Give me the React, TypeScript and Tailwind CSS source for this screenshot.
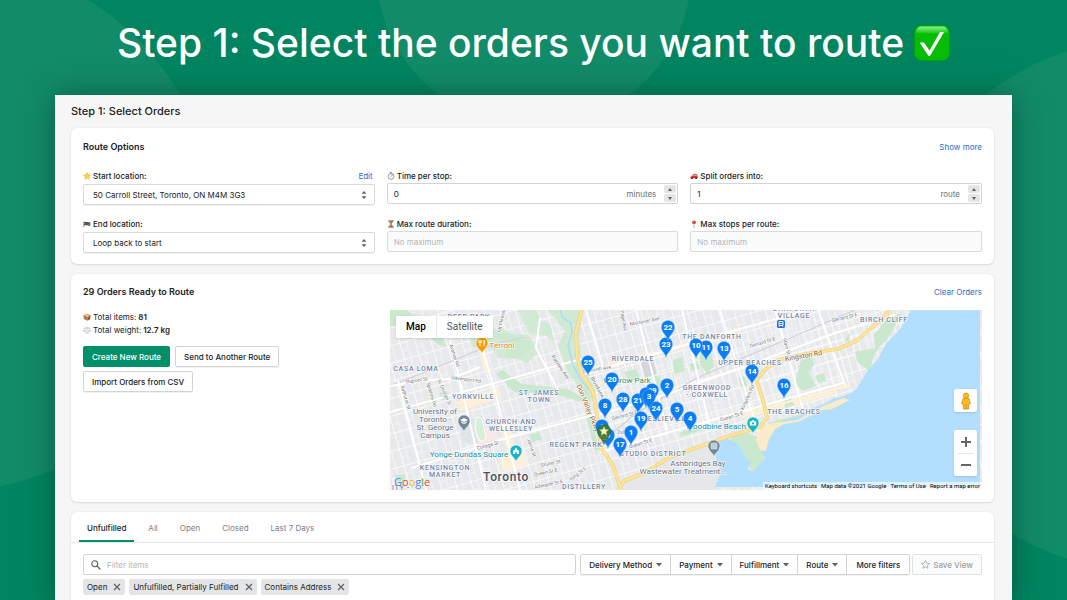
import React, { useState } from 'react';

const Star = ({ className }: { className: string }) => (
    <svg viewBox="0 0 16 16" className={className} aria-hidden="true">
        <path d="M8 1l2.200 4.600 5 .6-3.700 3.500 1 5L8 12.200 3.500 14.700l1-5L.8 6.200l5-.6z" fill="#fdd44b" stroke="#f5a623" strokeWidth="1" strokeLinejoin="round" />
    </svg>
);

const Flag = ({ className }: { className: string }) => (
    <svg viewBox="0 0 16 16" className={className} aria-hidden="true">
        <path d="M1.500 3v11" stroke="#555" strokeWidth="1.200" />
        <path d="M2 4q3.500-1.500 6.500 0t6.500 0v7q-3.500 1.500-6.500 0T2 11z" fill="#8b8b8b" />
        <path d="M3 4h2v2H3zM7 4h2v2H7zM11 5h2v2h-2zM5 6h2v2H5zM9 6h2v2H9zM3 8h2v2H3zM7 8h2v2H7zM11 9h2v2h-2z" fill="#222" />
    </svg>
);

const Stopwatch = ({ className }: { className: string }) => (
    <svg viewBox="0 0 16 16" className={className} fill="none" stroke="#777" aria-hidden="true">
        <circle cx="8" cy="9" r="5.800" fill="#fafafa" strokeWidth="1.400" />
        <path d="M6.500 1.200h3M8 1.500V3M12.500 3.500l1 1M8 9l2.500-2.500" strokeWidth="1.400" strokeLinecap="round" />
    </svg>
);

const Hourglass = ({ className }: { className: string }) => (
    <svg viewBox="0 0 16 16" className={className} aria-hidden="true">
        <path d="M4.500 2.500h7c0 3-2 4-2.500 5.500.5 1.500 2.500 2.500 2.500 5.500h-7c0-3 2-4 2.500-5.500-.5-1.500-2.500-2.500-2.500-5.500z" fill="#e4e0da" stroke="#b9aca0" strokeWidth=".6" />
        <path d="M4.500 3.500h7L8.800 8l2.700 5h-7l2.700-5z" fill="#a9763f" />
        <path d="M2.500 1h11v2.200h-11zM2.500 12.800h11V15h-11z" fill="#7a3f26" />
    </svg>
);

const Car = ({ className }: { className: string }) => (
    <svg viewBox="0 0 16 16" className={className} aria-hidden="true">
        <path d="M.8 9.500l3-1.500 2.700-4.200q3.500-1 7 0L15.400 8v4.500H.8z" fill="#e2382c" />
        <path d="M5.300 8l2-3h2.200v3zM10.300 5h2.500l1 3h-3.500z" fill="#9fc7dc" />
        <circle cx="4.200" cy="12.300" r="1.900" fill="#333" />
        <circle cx="12.200" cy="12.300" r="1.900" fill="#333" />
    </svg>
);

const RoundPin = ({ className }: { className: string }) => (
    <svg viewBox="0 0 16 16" className={className} aria-hidden="true">
        <path d="M8 7v8" stroke="#8e8e8e" strokeWidth="1.400" strokeLinecap="round" />
        <circle cx="8" cy="4.500" r="3.700" fill="#de3a33" />
        <circle cx="6.900" cy="3.300" r="1" fill="#ff9f98" />
    </svg>
);

const Box = ({ className }: { className: string }) => (
    <svg viewBox="0 0 16 16" className={className} aria-hidden="true">
        <path d="M1 4l7-3 7 3-6 3z" fill="#dcb07a" />
        <path d="M1 4l8 3v8.500L1.500 12z" fill="#b5793f" />
        <path d="M9 7l6-3-.5 8L9 15.500z" fill="#8b5527" />
        <path d="M4 2.800l7 3v3l-1.800-.6L2.600 3.400z" fill="#eed9b5" />
    </svg>
);

const Scale = ({ className }: { className: string }) => (
    <svg viewBox="0 0 16 16" className={className} fill="none" stroke="#a9afb5" aria-hidden="true">
        <path d="M8 1.500V13M2.500 4h11M4.500 14.200h7" strokeWidth="1.200" strokeLinecap="round" />
        <path d="M3 4L1 10h4zM13 4l-2 6h4z" strokeWidth=".7" />
        <path d="M.8 10h4.400q-2.200 2.400-4.400 0zM10.800 10h4.400q-2.200 2.400-4.400 0z" fill="#c5cbd1" strokeWidth=".6" />
    </svg>
);

const CheckBadge = () => (
    <svg viewBox="0 0 36 36" className="size-9 shrink-0" role="img" aria-label="Done">
        <defs>
            <linearGradient id="gloss" x1="0" y1="0" x2="0" y2="1">
                <stop offset="0" stopColor="#8cf28a" />
                <stop offset="1" stopColor="#14c514" />
            </linearGradient>
        </defs>
        <rect x=".5" y=".5" width="35" height="35" rx="7" fill="#04bd04" stroke="#079c16" />
        <path d="M7 1.500h22q4 0 5 5.500-1 1.500-4 1.500H6Q3 8.500 2 7q1-5.500 5-5.500z" fill="url(#gloss)" />
        <path d="M5.500 17.500h4.500l5.500 8L26 7h4L16 31h-1.500z" fill="#fff" />
    </svg>
);

interface Marker {
    n: number;
    x: number;
    y: number;
}

const markers: Marker[] = [
    { n: 23, x: 276, y: 34 }, { n: 22, x: 278, y: 17 }, { n: 11, x: 316, y: 37 }, { n: 10, x: 306, y: 35 },
    { n: 13, x: 334, y: 38 }, { n: 25, x: 198, y: 52 }, { n: 20, x: 222, y: 69 }, { n: 28, x: 233, y: 89 },
    { n: 2, x: 277, y: 75 }, { n: 29, x: 262, y: 80 }, { n: 21, x: 248, y: 90 }, { n: 24, x: 266, y: 98 },
    { n: 7, x: 256, y: 84 }, { n: 3, x: 259, y: 86 }, { n: 5, x: 287, y: 99 }, { n: 4, x: 300, y: 108 },
    { n: 8, x: 215, y: 95 }, { n: 19, x: 251, y: 108 }, { n: 1, x: 241, y: 122 }, { n: 6, x: 212, y: 116 },
    { n: 9, x: 218, y: 125 }, { n: 17, x: 230, y: 134 }, { n: 14, x: 362, y: 61 }, { n: 16, x: 394, y: 75 },
];

interface Label {
    t: string;
    x: number;
    y: number;
    r?: number;
}

const districts: Label[] = [
    { t: 'DEER PARK', x: 79, y: 9 }, { t: 'CASA LOMA', x: 26, y: 61 }, { t: 'YORKVILLE', x: 83, y: 89 },
    { t: 'ST. JAMES', x: 149, y: 85 }, { t: 'TOWN', x: 149, y: 92 }, { t: 'CHURCH AND', x: 121, y: 114 },
    { t: 'WELLESLEY', x: 121, y: 121 }, { t: 'REGENT PARK', x: 186, y: 137 }, { t: 'KENSINGTON', x: 55, y: 160 },
    { t: 'MARKET', x: 55, y: 167 }, { t: 'DISTILLERY', x: 194, y: 179 }, { t: 'RIVERDALE', x: 243, y: 51 },
    { t: 'THE DANFORTH', x: 322, y: 29 }, { t: 'UPPER BEACHES', x: 360, y: 55 }, { t: 'GREENWOOD', x: 317, y: 80 },
    { t: '- COXWELL', x: 317, y: 87 }, { t: 'LESLIEVILLE', x: 277, y: 111 }, { t: 'STUDIO DISTRICT', x: 263, y: 146 },
    { t: 'DANFORTH', x: 404, y: 1 }, { t: 'VILLAGE', x: 404, y: 8 }, { t: 'BIRCH CLIFF', x: 494, y: 12 },
    { t: 'THE BEACHES', x: 404, y: 104 }, { t: 'ITY -', x: 11, y: 180 },
];

const streets: Label[] = [
    { t: 'Dupont St', x: 27, y: 72, r: -8 }, { t: 'Davenport Rd', x: 76, y: 71, r: 8 }, { t: 'Avenue Rd', x: 63, y: 46, r: 72 },
    { t: 'Bathurst St', x: 14, y: 88, r: 74 }, { t: 'Spadina Rd', x: 40, y: 85, r: 74 }, { t: 'St George St', x: 53, y: 83, r: 66 },
    { t: 'College St', x: 98, y: 137, r: -15 }, { t: 'Jarvis St', x: 140, y: 138, r: 72 }, { t: 'Shuter St', x: 161, y: 155, r: -12 },
    { t: 'Queen St E', x: 156, y: 164, r: -12 }, { t: 'Adelaide St E', x: 159, y: 176, r: -12 }, { t: 'King St E', x: 189, y: 165, r: -38 },
    { t: 'Bayview Ave', x: 169, y: 58, r: 56 }, { t: 'Mortimer Ave', x: 255, y: 13, r: -12 }, { t: 'Pape Ave', x: 232, y: 11, r: 80 },
    { t: 'Danforth Ave', x: 207, y: 61, r: -10 }, { t: 'Broadview', x: 206, y: 78, r: 62 }, { t: 'Gerrard St E', x: 235, y: 107, r: -15 },
    { t: 'Queen St E', x: 251, y: 135, r: -17 }, { t: 'Dundas', x: 236, y: 123, r: -8 }, { t: 'Queen St E', x: 342, y: 108, r: -17 },
    { t: 'Kingston Rd', x: 359, y: 88, r: -66 }, { t: 'Gerrard St E', x: 373, y: 34, r: -17 }, { t: 'Gerrard St E', x: 455, y: 9, r: -14 },
    { t: 'Main St', x: 395, y: 37, r: 75 }, { t: 'Mt Pleasant Rd', x: 114, y: 6, r: -80 },
];

const PlacePin = ({ x, y, fill, children }: { x: number; y: number; fill: string; children: React.ReactNode }) => (
    <g transform={`translate(${x} ${y})`}>
        <path d="M0 10.500C-1.500 6-6 5-6 0a6 6 0 0 1 12 0c0 5-4.500 6-6 10.500z" fill={fill} stroke="#fff" strokeWidth=".5" />
        {children}
    </g>
);

const CityMap = () => (
    <svg viewBox="0 0 592 180" preserveAspectRatio="xMidYMid slice" className="block size-full" role="img" aria-label="Map of Toronto orders">
        <defs>
            <pattern id="blocks" width="15" height="17" patternUnits="userSpaceOnUse" patternTransform="rotate(-16)">
                <path d="M0 0h15M0 0v17" stroke="#fff" strokeWidth="1.500" fill="none" />
                <path d="M7 0v17M0 9h7" stroke="#f8f8f9" strokeWidth=".8" fill="none" />
            </pattern>
            <pattern id="lanes" width="7" height="19" patternUnits="userSpaceOnUse" patternTransform="rotate(-16)">
                <path d="M0 0h7M0 0v19" stroke="#fff" strokeWidth=".9" fill="none" />
            </pattern>
        </defs>
        <rect width="592" height="180" fill="#e8e9eb" />
        <rect width="592" height="180" fill="url(#blocks)" />
        <path d="M205 60l90-25 70-20 130-15-10 45-40 35-80 25-60 15-100 35z" fill="url(#lanes)" />

        {/* commercial areas */}
        <g fill="#fbf0d8">
            <path d="M66 92l42-14 3 10-40 13zM88 38l6-2 6 24-6 1zM110 112l8-2 8 36-8 2zM110 147l24-6 3 14-25 6zM205 58l60-17 1 4-60 17zM270 40l80-23 1 4-80 23zM352 106l95-26 1 3-95 26z" />
        </g>
        <path d="M70 112l22-6 6 20-8 8-18-2z" fill="#dfe3ea" />
        <path d="M86 124l18-5 4 12-18 6z" fill="#f8e7e4" />

        {/* parks and ravines */}
        <g fill="#c9e8cd">
            <path d="M0 0h17l9 10 13 7 11 7 7 13-8-2-10-8-14-3-12-8H0z" />
            <path d="M17 2l9 2 6 6-8 2zM75 20l22 2 15-4 12 8 18 6 1 6-17 11-18-1-5-8-20-3z" opacity=".75" />
            <path d="M128 0h19l3 10 10 3 4 18-10-6-15-1zM105 22l34 3 10 18-12 10-20-8z" opacity=".75" />
            <path d="M158 0h34l-3 30 6 30 11 20-2 12-14-14-12-15-10-28 7-14z" opacity=".8" />
            <path d="M112 60l20 14 46 5 15 9-1 4-24-7-44-3-18-18z" />
            <path d="M140 125l9-3 3 7-10 3zM5 165h10l-1 10H6zM50 83l7-2 3 7-8 2zM283 50l9-3 3 14-11 3zM299 54l8-3 3 8-8 2zM310 36l9-2 5 22-7 8-7-10zM262 67l7-2 5 15-8 2zM348 68l6-2 4 10-7 2zM235 62l11-3 4 10-12 3z" />
            <path d="M411 50l11-4 2 9-5 8 7 13-13 5-8-7 2-9zM425 66l9-3 2 8-8 2zM394 89l7-2 3 8-9 3zM454 30l6-7-1 9zM465 42l20-4-1-13 13-16 15-6-12 22-15 18-6 18-12-10z" />
            <path d="M377 113l30-8 30-10 16-9 8 2-20 10-34 11-28 8zM340 126l18-3 10 4 2 16 4 8-11 12-8-14-11-10zM262 172l12-8 22-4 4 8-23 8z" />
            <path d="M290 122l20-6 1 4-20 7zM190 72l10 14 1 20 8 34-4 1-9-36z" />
        </g>
        <path d="M86 108q6-3 7 5l3 13q-1 6-6 5-5-7-5-14z" fill="#d7efd9" stroke="#fff" strokeWidth="1" />
        <path d="M250 47l11-3 6 20-12 4z" fill="#d3d6da" />

        {/* port lands */}
        <path d="M232 180l6-12 40-18 35-14 20-4-8 18 6 18-8 12z" fill="#e6e7e9" />

        {/* railways */}
        <g fill="none" stroke="#cfd2d6" strokeWidth="1.200">
            <path d="M0 76l60-24 40-17 35-8" />
            <path d="M205 138l40-34 60-35 50-22 50-21 60-26" />
        </g>

        {/* main roads */}
        <g fill="none" stroke="#fff" strokeWidth="2">
            <path d="M0 76q30-6 60-7l30-12M60 30l36 150M0 102l195-54M22 158l95-30 90-24M8 70l28 110M92 38l12 40 26 102M150 8l-4 30 22 42M192 65l165-48 60-17M205 106l75-23 85-30 80-30 60-18M210 142l140-40 103-29M246 0l31 120M330 0l38 122M385 0l28 100M428 0l28 78M292 0l28 118M196 0l18 60" />
        </g>
        <path d="M350 105l110-30" fill="none" stroke="#fff3d0" strokeWidth="2" />

        {/* lake */}
        <path d="M521 0l-10 18-16 17-7 14-10 11-11 18-6 5-11 4-6 1-8 5-13 5-16 9-12 3-15 8-8 10-2 12 5 8-12 14-5-3 3-8-6-3-4-10-4-5-10-5-10 4-2 12 6 18-6 15h265V0z" fill="#b3dfff" />
        <path d="M332 131l8-2 5 10-5 10-8-4zM349 155l4-8 6 8-4 1z" fill="#b3dfff" />
        <path d="M377 114l30-4 26-14 20-8 7 2-18 9-10 1-16 8-8 4-14 2-9 5-6 10-3 12-6-1-4-10 3-9z" fill="#fcebc8" />
        <path d="M361 137l11 4 2 9-9 7z" fill="#c9e8cd" />
        <path d="M170 0l3 8 8 5 1 10-4 12 5 20 8 15 8 10" fill="none" stroke="#a9dbfa" strokeWidth="1.500" />

        {/* highways */}
        <g fill="none" strokeLinejoin="round">
            <path d="M192 0l-6 22 1 24 4 16 12 20 4 23 4 33 12 17 8 25M228 180l6-9 20-8 26-16 34-12 28-10 28-8 7-9-5-22-6-16 10-11 12-9 18-4 27-5 15-2 18-8 20-17 14-13" stroke="#f3cb6d" strokeWidth="3.600" />
            <path d="M192 0l-6 22 1 24 4 16 12 20 4 23 4 33 12 17 8 25M228 180l6-9 20-8 26-16 34-12 28-10 28-8 7-9-5-22-6-16 10-11 12-9 18-4 27-5 15-2 18-8 20-17 14-13" stroke="#fde49c" strokeWidth="2.600" />
        </g>

        {/* labels */}
        <g textAnchor="middle" className="font-['Roboto',sans-serif]" stroke="#fff" strokeWidth="1.200" strokeLinejoin="round" paintOrder="stroke">
            <g className="text-[5px]" fill="#757a80">
                {streets.map((s, i) => (
                    <text key={i} transform={`translate(${s.x} ${s.y}) rotate(${s.r ?? 0})`}>{s.t}</text>
                ))}
            </g>
            <g className="text-[7px] font-medium tracking-widest" fill="#7283a6">
                {districts.map((d) => (
                    <text key={d.t} x={d.x} y={d.y}>{d.t}</text>
                ))}
            </g>
            <g className="text-[8px]" fill="#5f7285">
                <text x="45" y="104">University of</text>
                <text x="45" y="112">Toronto -</text>
                <text x="45" y="120">St. George</text>
                <text x="45" y="128">Campus</text>
                <text x="308" y="156">Ashbridges Bay</text>
                <text x="293" y="164">Wastewater Treatment...</text>
            </g>
            <g className="text-[8px]" fill="#0f8fa3">
                <text x="79" y="147">Yonge-Dundas Square</text>
                <text x="326" y="119">Woodbine Beach</text>
            </g>
            <text x="237" y="73" className="text-[8px]" fill="#2b9359">Withrow Park</text>
            <text x="112" y="38" className="text-[8px]" fill="#de7a12">Terroni</text>
            <text transform="translate(196 99) rotate(68)" className="text-[7px]" fill="#a05f2c">Don Valley Pkwy</text>
            <text transform="translate(414 48) rotate(-10)" className="text-[7px]" fill="#8c5a2b">Kingston Rd</text>
            <text x="116" y="171" className="text-[12px] font-medium tracking-wider" fill="#4b4f5a">Toronto</text>
        </g>

        {/* places */}
        <PlacePin x={92} y={33} fill="#f59f0b">
            <path d="M-2-3v6M2-3v6M-3.200-3v2.500h2.400V-3M2-3q1.500 2 0 3.500" fill="none" stroke="#fff" strokeWidth=".9" />
        </PlacePin>
        <PlacePin x={74} y={111} fill="#72879b">
            <path d="M0-3l4 2-4 2-4-2zM-2.500.5V2Q0 3.500 2.500 2V.5L0 1.700z" fill="#fff" />
        </PlacePin>
        <PlacePin x={126} y={141} fill="#12b5cb">
            <path d="M-3 3h6V-.5H2L0-3.500-2-.5h-1zM-.7 1h1.400v2H-.7z" fill="#fff" fillRule="evenodd" />
        </PlacePin>
        <PlacePin x={363} y={113} fill="#12b5cb">
            <path d="M-3.200-1.500h1.500L-1-2.800h2l.7 1.300h1.500v4h-6.400z" fill="#fff" />
            <circle cy=".4" r="1.100" fill="#12b5cb" />
        </PlacePin>
        <PlacePin x={324} y={136} fill="#72879b">
            <path d="M-2.800-2.800h5.600v5.600h-5.600zM-2.800-.9h5.600M-2.800 1h5.600M-.9-2.800v5.600M1-2.800v5.600" fill="none" stroke="#fff" strokeWidth=".7" />
        </PlacePin>
        <g transform="translate(391 14)">
            <rect x="-4" y="-4" width="8" height="8" rx="1.500" fill="#1a6fe0" />
            <path d="M-2-2.500h4v4h-4zM-2 2.800l1-1.300M2 2.800L1 1.500M-2-.3h4" fill="none" stroke="#fff" strokeWidth=".9" />
        </g>

        {/* order markers */}
        {markers.map((m) => (
            <g key={m.n} transform={`translate(${m.x} ${m.y})`}>
                <path d="M0 13.500C-1 8-6.600 6-6.600 0a6.600 6.600 0 0 1 13.200 0C6.600 6 1 8 0 13.500z" fill="#0a7df5" stroke="#8cc4ff" strokeWidth=".4" />
                <text y="3" textAnchor="middle" fill="#fff" className="font-['Roboto',sans-serif] text-[8px] font-bold">{m.n}</text>
            </g>
        ))}
        <g transform="translate(214 121)">
            <path d="M0 13.500C-1 8-6.600 6-6.600 0a6.600 6.600 0 0 1 13.200 0C6.600 6 1 8 0 13.500z" fill="#2f7d4f" stroke="#1e5c3a" strokeWidth=".5" />
            <path d="M-4.500 6h9M-3 8.500h6M-1.500 10.800h3" stroke="#8a7a45" strokeWidth=".9" />
            <path d="M0-4.500l1.300 3 3.200.3-2.400 2.200.8 3.200L0 2.500l-2.900 1.700.8-3.200-2.400-2.200 3.200-.3z" fill="#fff3bd" stroke="#e8b93c" strokeWidth=".4" />
        </g>
    </svg>
);

const GoogleMark = () => (
    <span className="absolute bottom-0 left-1 font-['Open_Sans',sans-serif] text-[11px] leading-4 font-medium [text-shadow:0_0_1px_white]">
        <span className="text-[#4285f4]">G</span>
        <span className="text-[#ea4335]">o</span>
        <span className="text-[#f2b300]">o</span>
        <span className="text-[#4285f4]">g</span>
        <span className="text-[#34a853]">l</span>
        <span className="text-[#ea4335]">e</span>
    </span>
);

const OrdersMap = () => (
    <div className="relative h-[180px] overflow-hidden">
        <CityMap />
        <div className="absolute top-1.5 left-1.5 flex h-[22px] bg-white font-['Roboto',sans-serif] text-[10px] shadow">
            <button className="border-r border-gray-200 px-2.5 font-medium text-black">Map</button>
            <button className="px-2.5 text-[#565656]">Satellite</button>
        </div>
        <button aria-label="Street View" className="absolute top-[79px] right-[5px] flex size-[23px] items-center justify-center rounded-xs bg-white shadow">
            <svg viewBox="0 0 12 18" className="h-[18px] w-3">
                <path d="M3 6.500h6l1.500 5-1.500.5-.5 5h-5L3 12l-1.500-.5z" fill="#fbbc1f" stroke="#c98a16" strokeWidth=".7" />
                <circle cx="6" cy="3.700" r="2.700" fill="#fbbc1f" stroke="#c98a16" strokeWidth=".7" />
                <path d="M6 12v5" stroke="#c98a16" strokeWidth=".7" />
            </svg>
        </button>
        <div className="absolute right-[5px] bottom-3.5 flex w-[23px] flex-col items-center rounded-xs bg-white shadow">
            <button aria-label="Zoom in" className="flex h-[23px] w-full items-center justify-center">
                <svg viewBox="0 0 10 10" className="size-2.5"><path d="M5 0v10M0 5h10" stroke="#666" strokeWidth="2" /></svg>
            </button>
            <span className="h-px w-4 bg-gray-200" />
            <button aria-label="Zoom out" className="flex h-[22px] w-full items-center justify-center">
                <svg viewBox="0 0 10 10" className="size-2.5"><path d="M0 5h10" stroke="#666" strokeWidth="2" /></svg>
            </button>
        </div>
        <GoogleMark />
        <div className="absolute right-0 bottom-0 flex h-2 items-center gap-1 bg-white/60 px-0.5 font-['Roboto',sans-serif] text-[6px] leading-none text-black">
            <button>Keyboard shortcuts</button>
            <span>Map data ©2021 Google</span>
            <a href="#terms">Terms of Use</a>
            <a href="#report">Report a map error</a>
        </div>
    </div>
);

const Card = ({ className = '', children }: { className?: string; children: React.ReactNode }) => (
    <section className={`rounded-md bg-white shadow-[0_0_2px_rgba(23,24,24,0.08),0_1px_2px_rgba(0,0,0,0.1)] ${className}`}>{children}</section>
);

const SelectField = ({ id, options }: { id: string; options: string[] }) => (
    <div className="relative">
        <select id={id} className="block h-[21px] w-full appearance-none rounded-xs border border-[#d8dadd] bg-white pr-6 pl-[9px] text-[#202223] shadow-[0_1px_0_rgba(0,0,0,0.05)]">
            {options.map((o) => <option key={o}>{o}</option>)}
        </select>
        <svg viewBox="0 0 6 8" className="pointer-events-none absolute top-[7px] right-2 h-2 w-1.5" fill="#5c5f62">
            <path d="M3 0l2.400 2.800H.6zM3 8l2.400-2.800H.6z" />
        </svg>
    </div>
);

const StepperField = ({ id, initial, unit }: { id: string; initial: number; unit: string }) => {
    const [value, setValue] = useState(initial);

    return (
        <div className="flex h-[21px] items-center rounded-xs border border-[#d2d5d8] bg-white pr-px">
            <input
                id={id}
                inputMode="numeric"
                value={value}
                onChange={(e) => setValue(Number(e.target.value) || 0)}
                className="h-full min-w-0 flex-1 bg-transparent pl-1.5 text-[#202223] outline-none"
            />
            <span className="mr-2 text-[#6d7175]">{unit}</span>
            <span className="flex flex-col gap-px">
                <button aria-label="Increase" onClick={() => setValue(value + 1)} className="flex h-2 w-3 items-center justify-center rounded-xs bg-[#e4e5e7]">
                    <svg viewBox="0 0 4 3" className="h-[3px] w-1" fill="#5c5f62"><path d="M2 0l2 3H0z" /></svg>
                </button>
                <button aria-label="Decrease" onClick={() => setValue(value - 1)} className="flex h-2 w-3 items-center justify-center rounded-xs bg-[#e4e5e7]">
                    <svg viewBox="0 0 4 3" className="h-[3px] w-1" fill="#5c5f62"><path d="M2 3l2-3H0z" /></svg>
                </button>
            </span>
        </div>
    );
};

const FieldLabel = ({ id, icon, children }: { id: string; icon: React.ReactNode; children: React.ReactNode }) => (
    <label htmlFor={id} className="flex h-[13px] items-center gap-0.5 font-medium text-[#202223]">
        {icon}
        {children}
    </label>
);

const disabledInput = 'block h-[21px] w-full rounded-xs border border-[#d8dadd] bg-[#fafbfb] px-1.5 placeholder:text-[#b3b6b9]';

const RouteOptions = () => (
    <Card className="px-3 pt-3 pb-[11px]">
        <div className="flex h-3.5 items-center justify-between">
            <h2 className="text-[9px] font-semibold">Route Options</h2>
            <a href="#more" className="text-[#2c6ecb]">Show more</a>
        </div>
        <div className="mt-[15px] grid grid-cols-3 gap-3">
            <div className="flex flex-col gap-3">
                <div className="flex flex-col gap-0.5">
                    <div className="flex items-center justify-between">
                        <FieldLabel id="start" icon={<Star className="size-2" />}>Start location:</FieldLabel>
                        <a href="#edit" className="pr-0.5 text-[#2c6ecb]">Edit</a>
                    </div>
                    <SelectField id="start" options={['50 Carroll Street, Toronto, ON M4M 3G3']} />
                </div>
                <div className="flex flex-col gap-0.5">
                    <FieldLabel id="end" icon={<Flag className="size-2" />}>End location:</FieldLabel>
                    <SelectField id="end" options={['Loop back to start', 'Finish at last stop']} />
                </div>
            </div>
            <div className="flex flex-col gap-[13px]">
                <div className="flex flex-col gap-px">
                    <FieldLabel id="time" icon={<Stopwatch className="size-2" />}>Time per stop:</FieldLabel>
                    <StepperField id="time" initial={0} unit="minutes" />
                </div>
                <div className="flex flex-col gap-px">
                    <FieldLabel id="duration" icon={<Hourglass className="size-2" />}>Max route duration:</FieldLabel>
                    <input id="duration" disabled placeholder="No maximum" className={disabledInput} />
                </div>
            </div>
            <div className="flex flex-col gap-[13px]">
                <div className="flex flex-col gap-px">
                    <FieldLabel id="split" icon={<Car className="size-2" />}>Split orders into:</FieldLabel>
                    <StepperField id="split" initial={1} unit="route" />
                </div>
                <div className="flex flex-col gap-px">
                    <FieldLabel id="stops" icon={<RoundPin className="size-2" />}>Max stops per route:</FieldLabel>
                    <input id="stops" disabled placeholder="No maximum" className={disabledInput} />
                </div>
            </div>
        </div>
    </Card>
);

const plainButton = 'h-[21px] rounded-xs border border-[#d2d5d8] bg-white px-2 font-medium text-[#202223] shadow-[0_1px_0_rgba(0,0,0,0.05)]';

const ReadyToRoute = () => (
    <Card className="px-3 pt-[11px] pb-3">
        <div className="flex h-3.5 items-center justify-between">
            <h2 className="text-[9px] font-semibold">29 Orders Ready to Route</h2>
            <a href="#clear" className="text-[#2c6ecb]">Clear Orders</a>
        </div>
        <div className="mt-[11px] grid grid-cols-[307fr_592fr]">
            <div>
                <p className="flex h-[13px] items-center gap-0.5">
                    <Box className="size-2" /> Total items: <b className="font-semibold">81</b>
                </p>
                <p className="flex h-[13px] items-center gap-0.5">
                    <Scale className="size-2" /> Total weight: <b className="font-semibold">12.7 kg</b>
                </p>
                <div className="mt-2.5 flex flex-wrap gap-x-[5px] gap-y-1 pr-[100px]">
                    <button className="h-[21px] rounded-xs bg-[#008f6b] px-[9px] font-medium text-white">Create New Route</button>
                    <button className={plainButton}>Send to Another Route</button>
                    <button className={plainButton}>Import Orders from CSV</button>
                </div>
            </div>
            <OrdersMap />
        </div>
    </Card>
);

const tabs = ['Unfulfilled', 'All', 'Open', 'Closed', 'Last 7 Days'];
const filters = ['Delivery Method', 'Payment', 'Fulfillment', 'Route'];

const OrderList = () => {
    const [activeTab, setActiveTab] = useState('Unfulfilled');
    const [tags, setTags] = useState(['Open', 'Unfulfilled, Partially Fulfilled', 'Contains Address']);

    return (
        <Card className="flex-1">
            <div className="flex gap-1.5 border-b border-[#e6e7e9] px-2">
                {tabs.map((tab) => (
                    <button
                        key={tab}
                        onClick={() => setActiveTab(tab)}
                        className={
                            tab === activeTab
                                ? 'h-[30px] border-b-2 border-[#008f6b] px-2 pt-[3px] font-medium text-[#202223]'
                                : 'h-[30px] border-b-2 border-transparent px-2 pt-[3px] text-[#7d8185]'
                        }
                    >
                        {tab}
                    </button>
                ))}
            </div>
            <div className="px-3 pt-[11px]">
                <div className="flex">
                    <label className="flex h-[21px] min-w-0 flex-1 items-center gap-1.5 rounded-xs border border-[#d2d5d8] pl-[7px]">
                        <svg viewBox="0 0 20 20" className="size-2.5" fill="none" stroke="#5c5f62" strokeWidth="2.200" aria-hidden="true">
                            <circle cx="7.500" cy="7.500" r="6" />
                            <path d="M12 12l7 7" />
                        </svg>
                        <input aria-label="Filter items" placeholder="Filter items" className="min-w-0 flex-1 bg-transparent outline-none placeholder:text-[#b3b6b9]" />
                    </label>
                    <div className="ml-1 flex h-[21px] divide-x divide-[#d2d5d8] rounded-xs border border-[#d2d5d8] font-medium shadow-[0_1px_0_rgba(0,0,0,0.05)]">
                        {filters.map((f) => (
                            <button key={f} className="flex items-center gap-1 px-2">
                                {f}
                                <svg viewBox="0 0 6 4" className="h-1 w-1.5" fill="#5c5f62"><path d="M0 0h6L3 3.500z" /></svg>
                            </button>
                        ))}
                        <button className="px-[9px]">More filters</button>
                    </div>
                    <button disabled className="ml-0.5 flex h-[21px] items-center gap-[3px] rounded-xs border border-[#dfe1e3] bg-[#fafbfb] px-2 font-medium text-[#9b9fa3]">
                        <svg viewBox="0 0 16 16" className="size-[9px]" fill="none" stroke="#a5a9ad" strokeWidth="1.500" strokeLinejoin="round">
                            <path d="M8 1l2.200 4.600 5 .6-3.700 3.500 1 5L8 12.200l-4.500 2.500 1-5L.8 6.200l5-.6z" />
                        </svg>
                        Save View
                    </button>
                </div>
                <div className="mt-1 flex gap-1 pb-3">
                    {tags.map((tag) => (
                        <span key={tag} className="flex h-4 items-center gap-1.5 rounded-xs bg-[#e4e5e7] px-1 text-[#202223]">
                            {tag}
                            <button aria-label={`Remove ${tag}`} onClick={() => setTags(tags.filter((t) => t !== tag))}>
                                <svg viewBox="0 0 8 8" className="size-2"><path d="M1 1l6 6M7 1L1 7" stroke="#5c5f62" strokeWidth="1.200" /></svg>
                            </button>
                        </span>
                    ))}
                </div>
            </div>
        </Card>
    );
};

export default function App() {
    return (
        <div className="relative isolate flex h-screen flex-col overflow-hidden bg-[#008560] font-['Inter','Liberation_Sans',sans-serif]">
            <div className="absolute -top-[39px] -left-[315px] -z-10 size-[530px] rounded-full bg-[#128b69]" />
            <div className="absolute -top-[189px] left-1/2 -z-10 size-[316px] -translate-x-1/2 rounded-full bg-[#128b69]" />
            <div className="absolute top-[38px] -right-[350px] -z-10 size-[534px] rounded-full bg-[#128b69]" />

            <header className="flex h-[95px] shrink-0 items-start justify-center gap-2.5 pt-[25px]">
                <h1 className="text-[39px] leading-9 font-medium whitespace-nowrap text-white">Step 1: Select the orders you want to route</h1>
                <CheckBadge />
            </header>

            <main className="mx-[55px] flex flex-1 flex-col bg-[#f6f6f7] pr-[18px] pl-4 text-[8px] leading-3 text-[#202223] shadow-[0_0_28px_rgba(0,50,35,0.5)]">
                <h2 className="pt-2 pb-[9px] text-[11px] leading-4 font-medium">Step 1: Select Orders</h2>
                <div className="flex flex-1 flex-col gap-2.5">
                    <RouteOptions />
                    <ReadyToRoute />
                    <OrderList />
                </div>
            </main>
        </div>
    );
}
